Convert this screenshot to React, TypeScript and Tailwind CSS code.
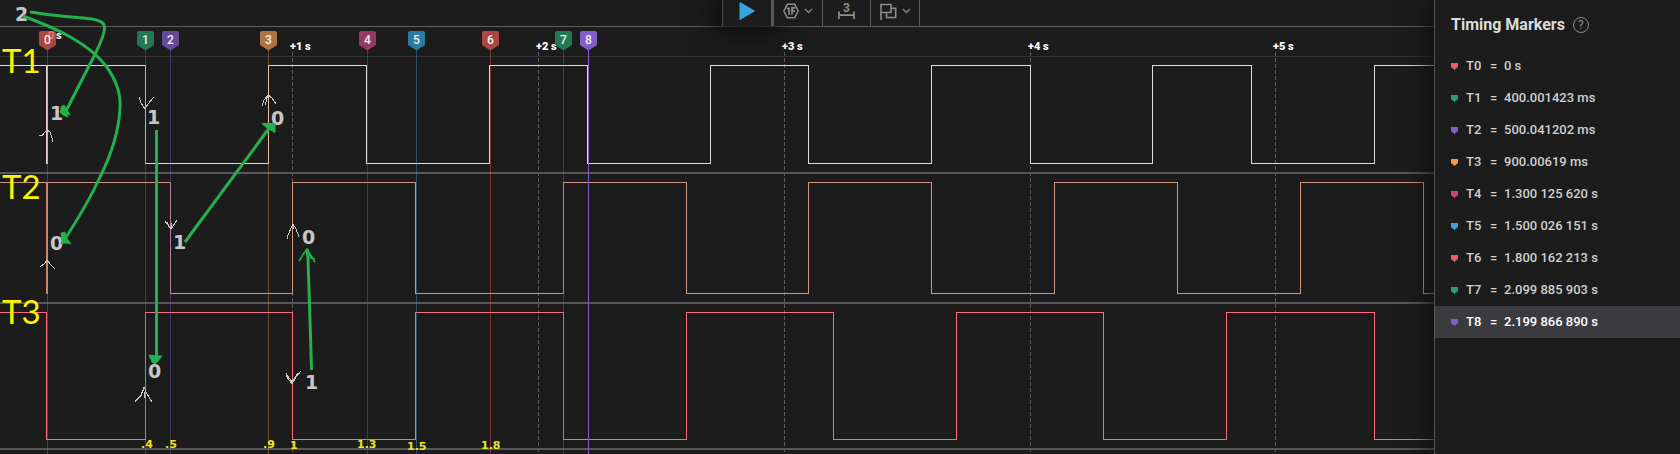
import React from "react";

type Marker = { id: number; x: number; color: string; fill: string; value: string; active?: boolean };

const markers: Marker[] = [
  { id: 0, x: 47, color: "#ef5b58", fill: "#aa4745", value: "0 s" },
  { id: 1, x: 145, color: "#27a077", fill: "#237858", value: "400.001423 ms" },
  { id: 2, x: 170, color: "#825ecb", fill: "#644a98", value: "500.041202 ms" },
  { id: 3, x: 268, color: "#f2994a", fill: "#b07440", value: "900.00619 ms" },
  { id: 4, x: 367, color: "#d13f80", fill: "#963961", value: "1.300 125 620 s" },
  { id: 5, x: 416, color: "#38a3dc", fill: "#2c79a2", value: "1.500 026 151 s" },
  { id: 6, x: 490, color: "#ef5b58", fill: "#aa4745", value: "1.800 162 213 s" },
  { id: 7, x: 563, color: "#27a077", fill: "#237858", value: "2.099 885 903 s" },
  { id: 8, x: 588, color: "#825ecb", fill: "#825ecb", value: "2.199 866 890 s", active: true },
];

const channels = [
  { color: "#dcdcdc", glitch: "#e9cfcf", high: 65, low: 163, edges: [145, 268, 366, 489, 587, 710, 808, 931, 1030, 1152, 1251, 1374] },
  { color: "#cd967c", glitch: "#d58a70", high: 182, low: 293, edges: [170, 292, 415, 563, 686, 808, 931, 1054, 1177, 1300, 1423] },
  { color: "#ff6b7e", glitch: "", high: 312, low: 439, edges: [46, 145, 292, 415, 563, 686, 833, 956, 1103, 1226, 1374] },
];

const seconds = [
  { x: 292, label: "+1 s" },
  { x: 538, label: "+2 s" },
  { x: 784, label: "+3 s" },
  { x: 1030, label: "+4 s" },
  { x: 1275, label: "+5 s" },
];

const levels = [
  { x: 15, y: 21, t: "2" },
  { x: 50, y: 120, t: "1" },
  { x: 147, y: 124, t: "1" },
  { x: 271, y: 125, t: "0" },
  { x: 50, y: 250, t: "0" },
  { x: 173, y: 249, t: "1" },
  { x: 302, y: 244, t: "0" },
  { x: 148, y: 378, t: "0" },
  { x: 305, y: 389, t: "1" },
];

const times = [
  { x: 141, y: 448, t: ".4" },
  { x: 165, y: 448, t: ".5" },
  { x: 263, y: 448, t: ".9" },
  { x: 290, y: 449, t: "1" },
  { x: 357, y: 448, t: "1.3" },
  { x: 407, y: 450, t: "1.5" },
  { x: 481, y: 449, t: "1.8" },
];

function wavePath(high: number, low: number, edges: number[]) {
  let level = high;
  let d = `M0 ${high + 0.5}`;
  edges.forEach((x) => {
    level = level === high ? low : high;
    d += `H${x + 0.5}V${level + 0.5}`;
  });
  return d + "H4000";
}

function Chevron() {
  return (
    <svg width="9" height="6" viewBox="0 0 9 6" fill="none" stroke="#85858a" strokeWidth="1.3">
      <path d="M1 1l3.5 3.5L8 1" />
    </svg>
  );
}

function Toolbar() {
  const button = "relative flex items-center justify-center border-r border-[#5b5b60] bg-[#1c1c1c]";
  return (
    <header className="relative z-10 flex h-[27px] justify-center border-b border-[#5f5f5f] pl-[208px]">
      <div className="flex">
        <button
          aria-label="Start"
          className="flex w-[52px] items-center justify-center border-l border-r-3 border-l-[#4a4a4e] border-r-[#5b5860] bg-[#1c1c1c] pb-[4px] shadow-[0_0_26px_8px_#0e0e0e]"
        >
          <svg width="16" height="18" viewBox="0 0 16 18">
            <path d="M1 .5L15.500 9L1 17.500Z" fill="#38a3dc" stroke="#38a3dc" strokeLinejoin="round" strokeWidth="1" />
          </svg>
        </button>
        <button aria-label="Glitch filter" className={`${button} w-[49px] gap-[5px] pb-[4px]`}>
          <svg width="16" height="16" viewBox="0 0 16 16" fill="none" stroke="#8d8d90">
            <path d="M4.300 1.300h7.400L15.200 8l-3.500 6.700H4.300L.8 8z" strokeWidth="1.500" />
            <path d="M3.700 5.300H6V11.800M9 11.800V4.800H12.500M9 8.200h3" strokeWidth="1.700" />
          </svg>
          <Chevron />
        </button>
        <button aria-label="Measure" className={`${button} w-[48px] pb-[6px]`}>
          <svg width="17" height="17" viewBox="0 0 17 17">
            <path d="M1 9.500V17M16 9.500V17M1 13.200H16" stroke="#8d8d90" strokeWidth="1.700" />
            <text x="8.500" y="10" textAnchor="middle" fill="#8d8d90" fontFamily="Roboto, sans-serif" fontSize="12" fontWeight="700">
              3
            </text>
          </svg>
        </button>
        <button aria-label="Annotate" className={`${button} w-[49px] gap-[5px] pb-[4px]`}>
          <svg width="17" height="17" viewBox="0 0 17 17" fill="none" stroke="#8d8d90" strokeWidth="1.600">
            <path d="M1 17V1.500H11V9.500H1M11 5.200H15.700V14.500H6.500V9.500" />
          </svg>
          <Chevron />
        </button>
      </div>
    </header>
  );
}

function Chart() {
  return (
    <svg className="block h-[427px] w-full" role="img" aria-label="Digital waveforms T1, T2 and T3">
      <g transform="translate(0 -27)">
        <rect y="56" width="100%" height="1" fill="#323236" />
        {[172, 302, 448].map((y) => (
          <rect key={y} y={y} width="100%" height="2" fill="#57575b" />
        ))}
        {seconds.map((s) => (
          <g key={s.label}>
            <path d={`M${s.x + 0.5} 52V454`} stroke="#5a5a5d" strokeDasharray="4 2" />
            <text x={s.x - 2} y="50" fill="#fff" fontFamily="Roboto, sans-serif" fontSize="11" fontWeight="900">
              {s.label}
            </text>
          </g>
        ))}
        {channels.map((c) => (
          <g key={c.color} fill="none" shapeRendering="crispEdges">
            <path d={wavePath(c.high, c.low, c.edges)} stroke={c.color} />
            {c.glitch && <path d={`M47 ${c.high}V${c.low + 1}`} stroke={c.glitch} strokeWidth="2" />}
          </g>
        ))}
        <text x="56" y="39" fill="#e8e8e8" fontFamily="Roboto, sans-serif" fontSize="11" fontWeight="900">
          s
        </text>
        {markers.map((m) => (
          <g key={m.id}>
            <rect x={m.x} y="50" width="1" height="404" fill={m.color} opacity={m.active ? 1 : 0.4} />
            <path
              d={`M${m.x - 6} 31h13q2 0 2 2v12l-8.500 5.500l-8.500 -5.500v-12q0 -2 2 -2z`}
              fill={m.fill}
            />
            {m.id === 0 && (
              <text x="48" y="39" fill="#e07f7c" fontFamily="Roboto, sans-serif" fontSize="11" fontWeight="700">
                0
              </text>
            )}
            <text x={m.x + 0.5} y="44" textAnchor="middle" fill="#f1f1f1" fontFamily="Roboto, sans-serif" fontSize="12" fontWeight="500">
              {m.id}
            </text>
          </g>
        ))}
      </g>
    </svg>
  );
}

function Annotations() {
  return (
    <svg className="pointer-events-none absolute inset-0 z-20 h-full w-full">
      <g fill="none" stroke="#c8c8c8" strokeWidth="1" shapeRendering="crispEdges">
        <path d="M39 135.500h3l5 -5.500l3 2l3 9.500M47 130l-6 6" />
        <path d="M139 97l2 6l4 6l3 -5l6 -7M145 109l-2 -3" />
        <path d="M262 106l2 -6l4 -5l4 3l4 6M268 95l-3 10" />
        <path d="M165 221l6 8l6 -9M167 222l3 6M171 229v-6" />
        <path d="M287 239l1 -4l5 -11l3 5l3 8M293 224v5" />
        <path d="M40 267l5 -4l2 -3l3 4l5 5" />
        <path d="M286 373l1 4l5 7l4 -7l5 -6M287 375l5 7l6 -9M292 384v-4" />
        <path d="M135 402l6 -7l3 -8l3 7l5 8M144 388l-3 8l-6 5M144 392v6" />
      </g>
      <g fill="#c6c6c6" fontFamily="'DejaVu Sans', sans-serif" fontSize="19" fontWeight="700">
        {levels.map((l) => (
          <text key={`${l.x}-${l.y}`} x={l.x} y={l.y}>
            {l.t}
          </text>
        ))}
      </g>
      <g fill="none" stroke="#22b14c" strokeWidth="3">
        <path d="M30 12C48 15 72 17 92 19C103 21 106 24 104 32C101 44 96 52 90 64L65 113" />
        <path d="M23 16C58 29 88 43 106 66C117 81 121 94 120 108C119 130 112 153 100 177C91 197 78 219 63 242" />
        <path d="M156.500 130V358" />
        <path d="M185 242L270 127" />
        <path d="M311.500 370L310 320L308 258L307 249" />
        <path d="M299 261l5 -8l3 -4l8 13M307 249l4 9l4 1" strokeWidth="1.500" />
      </g>
      <g fill="#22b14c" stroke="#22b14c">
        <path d="M61 107l3 -2l2 3l4 7l-4 -1l2 3l-5 -2l-3 -3l1 -2z" />
        <path d="M61 233l4 -1l1 5l5 7l-4 -1h-3l-3 1l1 -3z" />
        <path d="M149 355l7 1l6 0l-4 5l-3 3l-3 -2z" />
        <path d="M262 123.500h13v9l-5 -3l-5 -3z" />
      </g>
      <g fill="#f2e61a" fontFamily="'DejaVu Sans', sans-serif" fontSize="11" fontWeight="700">
        {times.map((l) => (
          <text key={l.x} x={l.x} y={l.y}>
            {l.t}
          </text>
        ))}
      </g>
      <g fill="#fff200" fontFamily="Lato, sans-serif" fontSize="33" fontWeight="400">
        <text x="2" y="73">T1</text>
        <text x="2" y="199">T2</text>
        <text x="2" y="324">T3</text>
      </g>
    </svg>
  );
}

function MarkerPanel() {
  return (
    <aside className="relative z-30 w-[246px] shrink-0 border-l border-[#57575b] bg-[#1c1c1c] shadow-[0_0_24px_4px_#0e0e0e]">
      <div className="flex h-[50px] items-center gap-2 pl-4">
        <h2 className="text-base font-bold text-[#dcdcdc]">Timing Markers</h2>
        <button aria-label="Help" className="flex size-4 items-center justify-center rounded-full border border-[#8a8a8a] text-xs text-[#8a8a8a]">
          ?
        </button>
      </div>
      <ul>
        {markers.map((m) => (
          <li
            key={m.id}
            className={`flex h-8 items-center pl-4 text-[13px] font-medium ${m.active ? "bg-[#3b3a3f] text-white" : "text-[#cfcfcf]"}`}
          >
            <svg width="7" height="8" viewBox="0 0 7 8">
              <path d="M0 1h7v4L3.500 8L0 5z" fill={m.color} />
            </svg>
            <span className="ml-2 w-6">T{m.id}</span>
            <span className="w-[14px]">=</span>
            <span>{m.value}</span>
          </li>
        ))}
      </ul>
    </aside>
  );
}

export default function App() {
  return (
    <div className="flex min-h-screen overflow-hidden bg-[#1c1c1c] font-['Roboto',sans-serif]">
      <main className="relative min-w-0 flex-1">
        <Toolbar />
        <Chart />
        <Annotations />
      </main>
      <MarkerPanel />
    </div>
  );
}
